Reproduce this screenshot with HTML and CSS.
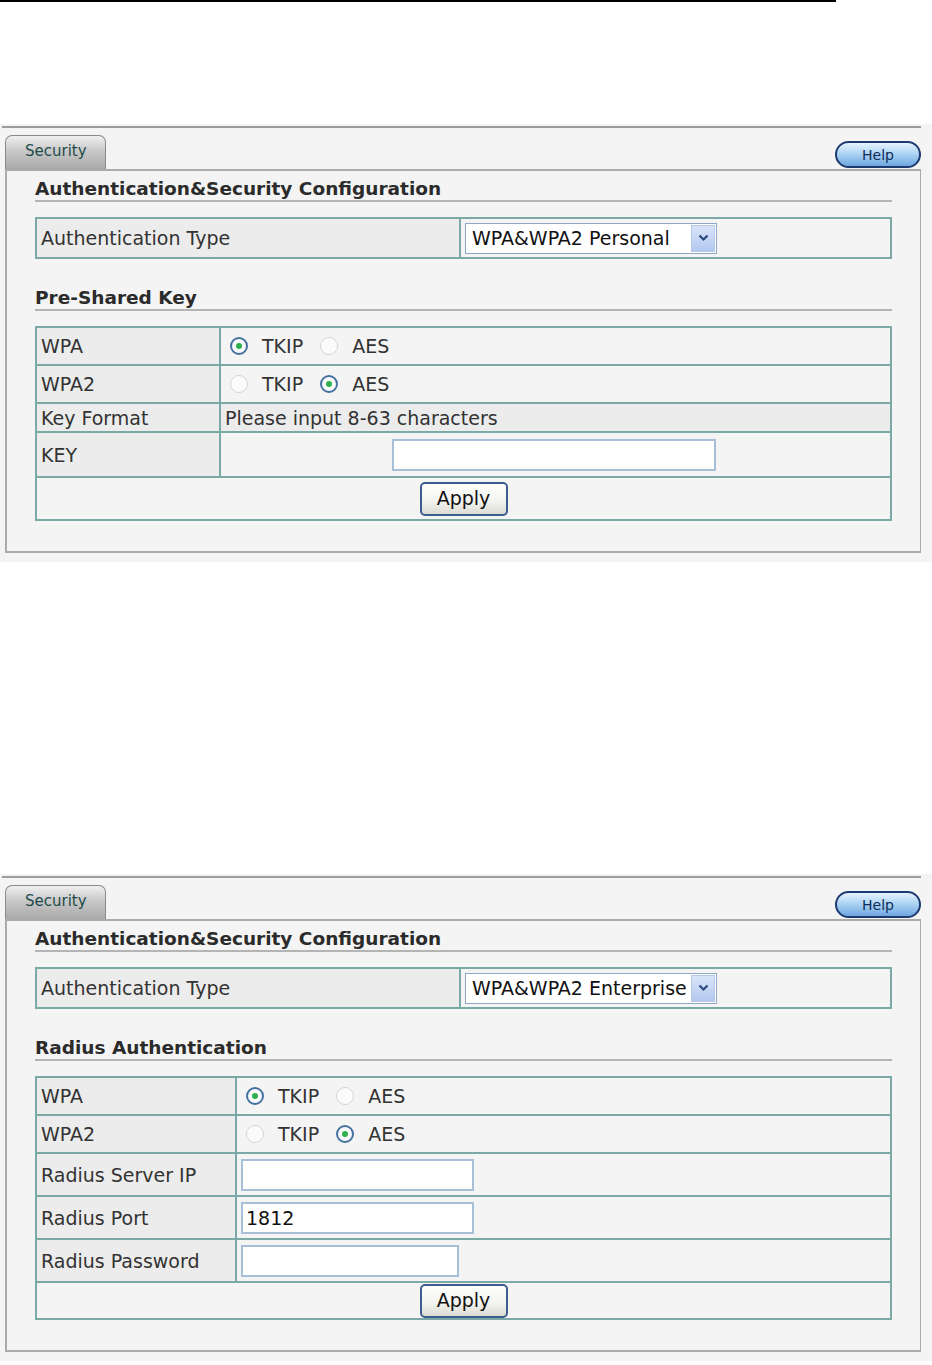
FILE: index.html
```html
<!DOCTYPE html>
<html lang="en">

<head>
    <meta charset="UTF-8">
    <title>Security</title>
    <link rel="stylesheet" href="styles.css">
</head>

<body>
    <div class="top-rule"></div>

    <div class="frame first">
        <div class="frame-line">
            <div class="tab-bar">
                <div class="tab">Security</div>
                <div class="help">Help</div>
            </div>
            <div class="panel">
                <div class="heading">Authentication&amp;Security Configuration</div>
                <table class="grid auth">
                    <tr>
                        <td class="label auth-label">Authentication Type</td>
                        <td class="value">
                            <div class="select">
                                <span>WPA&amp;WPA2 Personal</span>
                                <span class="arrow"><svg width="11" height="8" viewBox="0 0 11 8"><path d="M1.5 1.5 L5.5 5.5 L9.5 1.5" fill="none" stroke="#2b4a7a" stroke-width="2.2"/></svg></span>
                            </div>
                        </td>
                    </tr>
                </table>

                <div class="heading second">Pre-Shared Key</div>
                <table class="grid keys">
                    <tr class="tall">
                        <td class="label psk-label">WPA</td>
                        <td class="value">
                            <span class="radio on"></span><span class="opt">TKIP</span>
                            <span class="radio"></span><span class="opt">AES</span>
                        </td>
                    </tr>
                    <tr class="tall">
                        <td class="label">WPA2</td>
                        <td class="value">
                            <span class="radio"></span><span class="opt">TKIP</span>
                            <span class="radio on"></span><span class="opt">AES</span>
                        </td>
                    </tr>
                    <tr class="short">
                        <td class="label">Key Format</td>
                        <td class="value shaded">Please input 8-63 characters</td>
                    </tr>
                    <tr class="key-row">
                        <td class="label">KEY</td>
                        <td class="value center"><div class="field key-field"></div></td>
                    </tr>
                    <tr class="apply-row">
                        <td colspan="2" class="center"><div class="apply">Apply</div></td>
                    </tr>
                </table>
            </div>
        </div>
    </div>

    <div class="frame second-frame">
        <div class="frame-line">
            <div class="tab-bar">
                <div class="tab">Security</div>
                <div class="help">Help</div>
            </div>
            <div class="panel">
                <div class="heading">Authentication&amp;Security Configuration</div>
                <table class="grid auth">
                    <tr>
                        <td class="label auth-label">Authentication Type</td>
                        <td class="value">
                            <div class="select">
                                <span>WPA&amp;WPA2 Enterprise</span>
                                <span class="arrow"><svg width="11" height="8" viewBox="0 0 11 8"><path d="M1.5 1.5 L5.5 5.5 L9.5 1.5" fill="none" stroke="#2b4a7a" stroke-width="2.2"/></svg></span>
                            </div>
                        </td>
                    </tr>
                </table>

                <div class="heading second">Radius Authentication</div>
                <table class="grid keys">
                    <tr class="tall">
                        <td class="label radius-label">WPA</td>
                        <td class="value">
                            <span class="radio on"></span><span class="opt">TKIP</span>
                            <span class="radio"></span><span class="opt">AES</span>
                        </td>
                    </tr>
                    <tr class="tall">
                        <td class="label">WPA2</td>
                        <td class="value">
                            <span class="radio"></span><span class="opt">TKIP</span>
                            <span class="radio on"></span><span class="opt">AES</span>
                        </td>
                    </tr>
                    <tr class="input-row">
                        <td class="label">Radius Server IP</td>
                        <td class="value"><div class="field wide"></div></td>
                    </tr>
                    <tr class="input-row">
                        <td class="label">Radius Port</td>
                        <td class="value"><div class="field wide">1812</div></td>
                    </tr>
                    <tr class="input-row">
                        <td class="label">Radius Password</td>
                        <td class="value"><div class="field narrow"></div></td>
                    </tr>
                    <tr class="apply-row small">
                        <td colspan="2" class="center"><div class="apply">Apply</div></td>
                    </tr>
                </table>
            </div>
        </div>
    </div>
</body>

</html>
```

FILE: styles.css
```css
body {
    margin: 0;
    background-color: white;
    font-family: "DejaVu Sans", Verdana, sans-serif;
    color: #222;
}

.top-rule {
    width: 836px;
    height: 2px;
    background-color: black;
}

.frame {
    width: 930px;
    background-color: #f4f4f4;
    padding: 2px 0 9px 2px;
}

.first {
    margin-top: 122px;
}

.second-frame {
    margin-top: 312px;
}

.frame-line {
    width: 919px;
    border-top: 2px solid #9c9c9c;
}

.tab-bar {
    display: flex;
    justify-content: space-between;
    align-items: flex-end;
    height: 41px;
    padding-left: 3px;
}

.tab {
    width: 101px;
    height: 34px;
    box-sizing: border-box;
    border: 1px solid #8a8a8a;
    border-bottom: none;
    border-radius: 7px 7px 0 0;
    background: linear-gradient(#f0f0f0, #c8c8c8 45%, #a9a9a9);
    color: #1e4b4b;
    font-size: 15px;
    padding: 6px 0 0 19px;
}

.help {
    width: 86px;
    height: 27px;
    box-sizing: border-box;
    margin-bottom: 1px;
    border: 2px solid #1d3b70;
    border-radius: 14px;
    background: linear-gradient(#e6f3fd, #a9d1f3 50%, #6fa6df);
    color: #0d2c5a;
    font-size: 14px;
    text-align: center;
    padding-top: 4px;
}

.panel {
    margin-left: 3px;
    border: 2px solid #ababab;
    border-right-width: 1px;
    padding: 8px 28px 30px 28px;
}

.heading {
    font-weight: bold;
    font-size: 18.5px;
    line-height: 20px;
    color: #2b2b2b;
    padding-bottom: 1px;
    border-bottom: 2px solid #b4b4b4;
    margin-bottom: 15px;
}

.heading.second {
    margin-top: 29px;
}

.grid {
    width: 100%;
    border-collapse: collapse;
    border: 2px solid #7aa9a6;
}

.grid td {
    border: 2px solid #7aa9a6;
    font-size: 19px;
    color: #333;
    padding: 0 4px;
    height: 36px;
}

.label {
    background-color: #ececec;
}

.value {
    background-color: #f4f4f4;
}

.value.shaded {
    background-color: #ececec;
}

.auth td {
    height: 38px;
}

.auth-label {
    width: 414px;
}

.psk-label {
    width: 174px;
}

.radius-label {
    width: 190px;
}

.select {
    display: flex;
    align-items: center;
    justify-content: space-between;
    width: 252px;
    height: 31px;
    box-sizing: border-box;
    border: 1px solid #8fa8c8;
    background-color: white;
    padding: 0 1px 0 6px;
    color: #111;
}

.arrow {
    display: flex;
    align-items: center;
    justify-content: center;
    width: 22px;
    height: 25px;
    background: linear-gradient(#d9e4f9, #b3c8f0);
    border: 1px solid #b7c8e6;
}

.radio {
    display: inline-block;
    width: 18px;
    height: 18px;
    box-sizing: border-box;
    border: 1px solid #d6d6d0;
    border-radius: 50%;
    background-color: #fbfbfb;
    vertical-align: -2px;
    margin: 0 14px 0 5px;
    position: relative;
}

.radio.on {
    border: 2px solid #46729f;
    background-color: #f7f9fb;
}

.radio.on::after {
    content: "";
    position: absolute;
    left: 4px;
    top: 4px;
    width: 6px;
    height: 6px;
    border-radius: 50%;
    background-color: #2fb04c;
}

.opt {
    margin-right: 6px;
}

.short td {
    height: 27px;
}

.key-row td {
    height: 43px;
}

.input-row td {
    height: 41px;
}

.center {
    text-align: center;
}

.field {
    display: inline-block;
    height: 32px;
    box-sizing: border-box;
    border: 2px solid #a7bfd8;
    background-color: white;
    text-align: left;
    padding: 3px 3px 0;
    font-size: 19px;
    color: #111;
    vertical-align: middle;
}

.key-field {
    width: 324px;
    margin-right: 4px;
}

.wide {
    width: 233px;
}

.narrow {
    width: 218px;
}

.apply-row td {
    height: 41px;
    background-color: #f4f4f4;
}

.apply-row.small td {
    height: 35px;
}

.apply {
    display: inline-block;
    width: 88px;
    height: 34px;
    box-sizing: border-box;
    border: 2px solid #3b5d8f;
    border-radius: 5px;
    background: linear-gradient(#ffffff, #f2f2ee 60%, #dcdcd4);
    font-size: 19px;
    color: #111;
    padding-top: 3px;
    vertical-align: middle;
}
```
